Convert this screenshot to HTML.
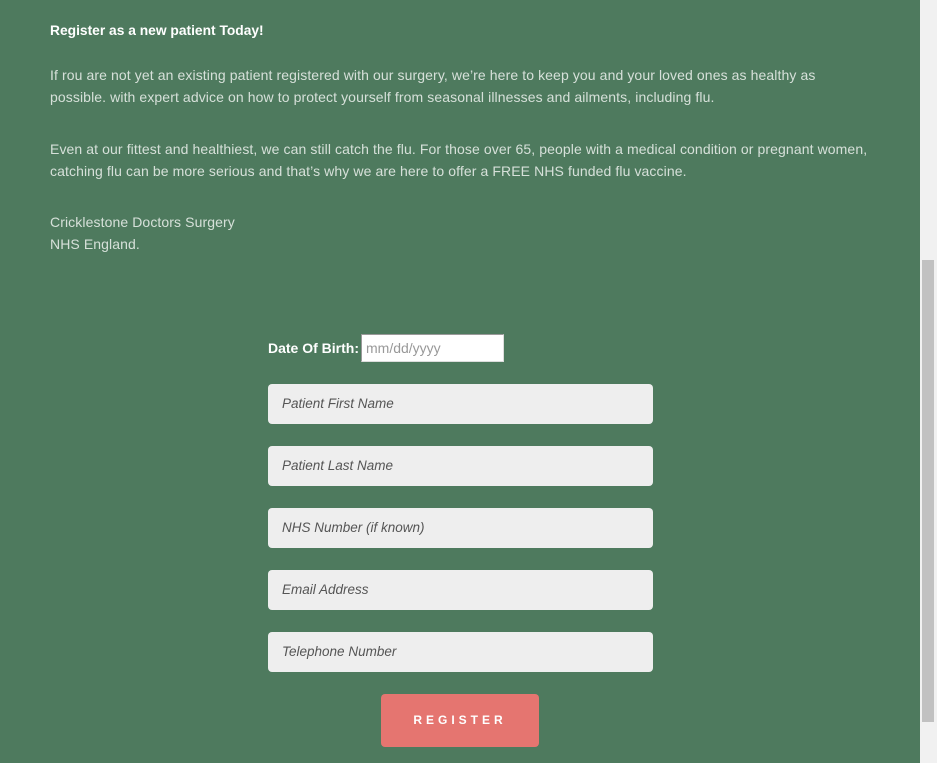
<!DOCTYPE html>
<html><head><meta charset="utf-8"><style>
html,body{margin:0;padding:0;width:937px;height:763px;overflow:hidden;background:#4e7a5e;font-family:"Liberation Sans",sans-serif;}
.sb{position:absolute;left:920px;top:0;width:17px;height:763px;background:#f1f1f1;}
.th{position:absolute;left:922px;top:260px;width:12px;height:462px;background:#c1c1c1;}
p{position:absolute;left:50px;margin:0;color:#d6e0d9;font-size:14px;letter-spacing:0.1px;line-height:22px;white-space:nowrap;}
h4{position:absolute;left:50px;top:20px;margin:0;color:#fff;font-size:13.8px;font-weight:bold;line-height:22px;}
.lab{position:absolute;left:268px;top:338px;color:#fff;font-weight:bold;font-size:14px;line-height:20px;}
.dob{position:absolute;left:361px;top:334px;background:#fff;border:1px solid #999;border-bottom-color:#ddd;border-right-color:#ddd;color:#999;font-size:14px;line-height:26px;padding-left:4px;box-sizing:border-box;width:143px;height:28px;}
.in{position:absolute;left:268px;width:385px;height:40px;background:#eeeeee;border-radius:4px;color:#555;font-style:italic;font-size:13.5px;line-height:40px;padding-left:14px;box-sizing:border-box;}
.btn{position:absolute;left:381px;top:694px;width:158px;height:53px;background:#e57570;border-radius:4px;color:#fff;font-weight:bold;font-size:12px;letter-spacing:4px;text-align:center;line-height:53px;}
</style></head><body>
<h4>Register as a new patient Today!</h4>
<p style="top:64px">If rou are not yet an existing patient registered with our surgery, we’re here to keep you and your loved ones as healthy as<br>possible. with expert advice on how to protect yourself from seasonal illnesses and ailments, including flu.</p>
<p style="top:138px">Even at our fittest and healthiest, we can still catch the flu. For those over 65, people with a medical condition or pregnant women,<br>catching flu can be more serious and that’s why we are here to offer a FREE NHS funded flu vaccine.</p>
<p style="top:211px">Cricklestone Doctors Surgery<br>NHS England.</p>
<div class="lab">Date Of Birth:</div>
<div class="dob">mm/dd/yyyy</div>
<div class="in" style="top:384px">Patient First Name</div>
<div class="in" style="top:446px">Patient Last Name</div>
<div class="in" style="top:508px">NHS Number (if known)</div>
<div class="in" style="top:570px">Email Address</div>
<div class="in" style="top:632px">Telephone Number</div>
<div class="btn">REGISTER</div>
<div class="sb"></div><div class="th"></div>
</body></html>
